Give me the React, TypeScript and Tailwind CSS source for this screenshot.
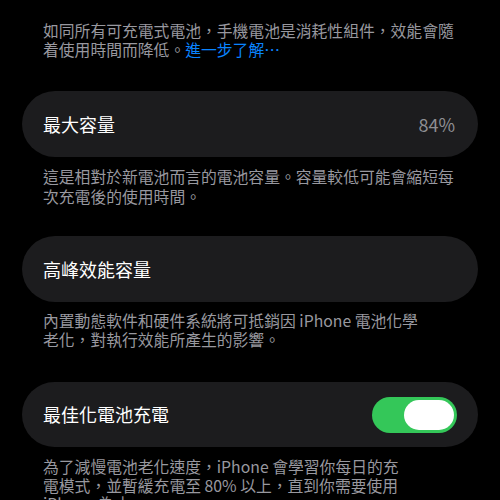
export default function App() {
  return (
    <div
      className="w-[500px] h-[500px] overflow-hidden bg-black text-white"
      style={{ fontFamily: '"Noto Sans CJK TC", "Noto Sans", sans-serif' }}
    >
      <div className="px-[22px]">
        <p className="pt-[21px] px-[21px] text-[15.8px] leading-[19px] text-[#98989f]">
          如同所有可充電式電池，手機電池是消耗性組件，效能會隨
          <br />
          着使用時間而降低。<span className="text-[#0a84ff]">進一步了解⋯</span>
        </p>

        <div className="mt-[32px] h-[66px] rounded-full bg-[#1c1c1e] flex items-center justify-between pl-[21px] pr-[23px]">
          <span className="text-[18px]">最大容量</span>
          <span className="text-[18px] text-[#8e8e93]">84%</span>
        </div>
        <p className="mt-[10px] px-[21px] text-[15.8px] leading-[20px] text-[#98989f]">
          這是相對於新電池而言的電池容量。容量較低可能會縮短每
          <br />
          次充電後的使用時間。
        </p>

        <div className="mt-[29px] h-[66px] rounded-full bg-[#1c1c1e] flex items-center pl-[21px]">
          <span className="text-[18px]">高峰效能容量</span>
        </div>
        <p className="mt-[9px] px-[21px] text-[15.8px] leading-[19px] text-[#98989f]">
          內置動態軟件和硬件系統將可抵銷因 iPhone 電池化學
          <br />
          老化，對執行效能所產生的影響。
        </p>

        <div className="mt-[33px] h-[65px] rounded-full bg-[#1c1c1e] flex items-center justify-between pl-[21px] pr-[21px]">
          <span className="text-[18px]">最佳化電池充電</span>
          <div className="w-[85px] h-[36px] rounded-full bg-[#34c759] flex items-center justify-end p-[3px]">
            <div className="w-[50px] h-[30px] rounded-full bg-white" />
          </div>
        </div>
        <p className="mt-[11px] px-[21px] text-[15.8px] leading-[18.5px] text-[#98989f]">
          為了減慢電池老化速度，iPhone 會學習你每日的充
          <br />
          電模式，並暫緩充電至 80% 以上，直到你需要使用
          <br />
          iPhone 為止。
        </p>
      </div>
    </div>
  );
}
